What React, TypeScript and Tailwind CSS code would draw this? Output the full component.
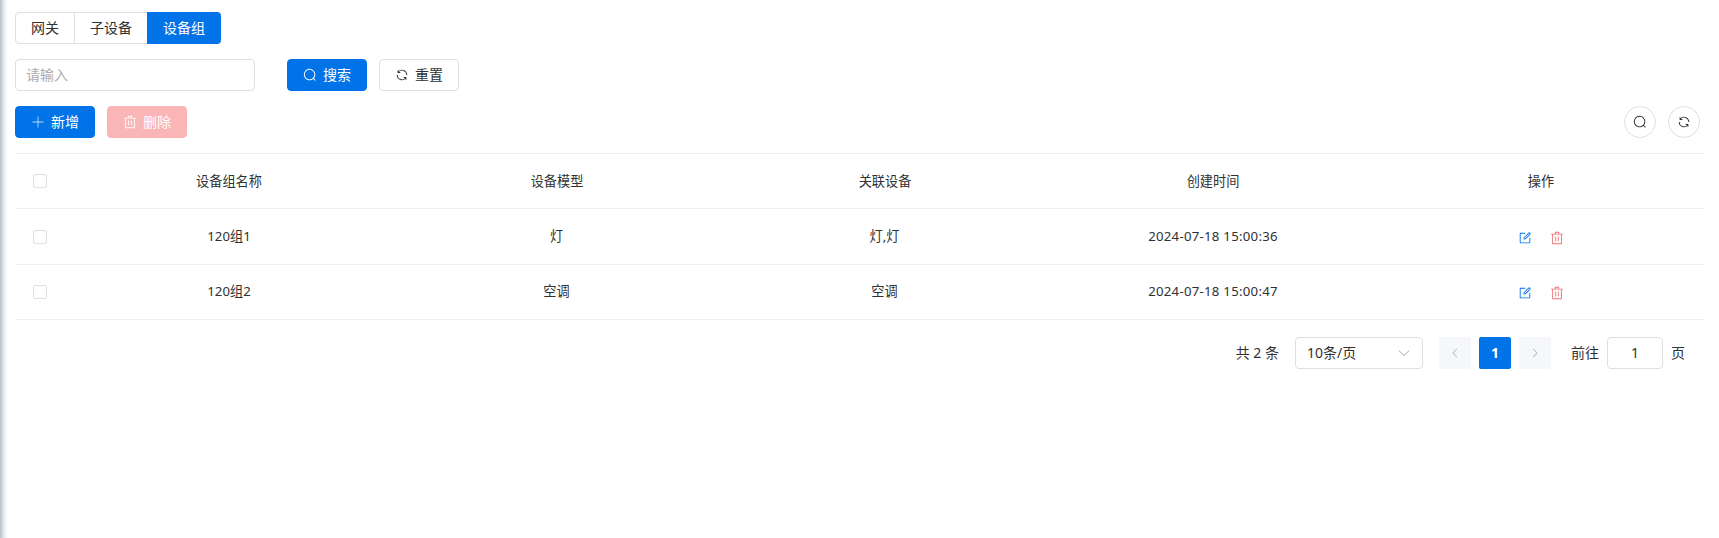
import { useState } from "react";

const SEARCH = ["m795.904 750.72 124.992 124.928a32 32 0 0 1-45.248 45.248L750.656 795.904a416 416 0 1 1 45.248-45.248zM480 832a352 352 0 1 0 0-704 352 352 0 0 0 0 704"];
const REFRESH = ["M771.776 794.88A384 384 0 0 1 128 512h64a320 320 0 0 0 555.712 216.448H654.72a32 32 0 1 1 0-64h149.056a32 32 0 0 1 32 32v148.928a32 32 0 1 1-64 0v-50.56zM276.288 295.616h92.992a32 32 0 0 1 0 64H220.16a32 32 0 0 1-32-32V178.56a32 32 0 0 1 64 0v50.56A384 384 0 0 1 896.128 512h-64a320 320 0 0 0-555.776-216.384z"];
const PLUS = ["M480 480V128a32 32 0 0 1 64 0v352h352a32 32 0 1 1 0 64H544v352a32 32 0 1 1-64 0V544H128a32 32 0 0 1 0-64z"];
const TRASH = ["M160 256H96a32 32 0 0 1 0-64h256V95.936a32 32 0 0 1 32-32h256a32 32 0 0 1 32 32V192h256a32 32 0 1 1 0 64h-64v672a32 32 0 0 1-32 32H192a32 32 0 0 1-32-32zm448-64v-64H416v64zM224 896h576V256H224zm192-128a32 32 0 0 1-32-32V416a32 32 0 0 1 64 0v320a32 32 0 0 1-32 32m192 0a32 32 0 0 1-32-32V416a32 32 0 0 1 64 0v320a32 32 0 0 1-32 32"];
const EDIT = [
  "M832 512a32 32 0 1 1 64 0v352a32 32 0 0 1-32 32H160a32 32 0 0 1-32-32V160a32 32 0 0 1 32-32h352a32 32 0 0 1 0 64H192v640h640z",
  "m469.952 554.24 52.8-7.552L847.104 222.4a32 32 0 1 0-45.248-45.248L477.44 501.44l-7.552 52.8zm422.4-422.4a96 96 0 0 1 0 135.808l-331.84 331.84a32 32 0 0 1-18.112 9.088L436.8 623.68a32 32 0 0 1-36.224-36.224l15.104-105.6a32 32 0 0 1 9.024-18.112l331.904-331.84a96 96 0 0 1 135.744 0z",
];
const ARROW = ["M831.872 340.864 512 652.672 192.128 340.864a30.592 30.592 0 0 0-42.752 0 29.12 29.12 0 0 0 0 41.6L489.664 714.24a32 32 0 0 0 44.672 0l340.288-331.712a29.12 29.12 0 0 0 0-41.728 30.592 30.592 0 0 0-42.752 0z"];

function Icon({ paths, className = "size-3.5" }: { paths: string[]; className?: string }) {
  return (
    <svg viewBox="0 0 1024 1024" fill="currentColor" className={`shrink-0 ${className}`}>
      {paths.map((d) => (
        <path key={d} d={d} />
      ))}
    </svg>
  );
}

function Checkbox() {
  return <span className="block size-3.5 rounded-[2px] border border-[#dcdfe6] bg-white" />;
}

const rows = [
  { name: "120组1", model: "灯", devices: "灯,灯", time: "2024-07-18 15:00:36" },
  { name: "120组2", model: "空调", devices: "空调", time: "2024-07-18 15:00:47" },
];

const button = "flex h-8 w-20 items-center justify-center gap-1.5 rounded-[4px] border";
const pager = "flex size-8 items-center justify-center rounded-[2px]";
const grid = "grid grid-cols-[50px_repeat(5,1fr)] items-center border-b border-[#ebeef5] text-center text-[13.2px]";

export default function App() {
  const [keyword, setKeyword] = useState("");
  const [page, setPage] = useState("1");
  return (
    <div className="flex h-[538px] bg-white font-['Noto_Sans','Noto_Sans_CJK_SC',sans-serif] text-sm leading-5 text-[#303133]">
      <div className="w-2 shrink-0 bg-linear-to-r from-[#b9bfc8] via-[#e9ebee] to-white" />
      <main className="flex min-w-0 flex-1 flex-col pt-3 pr-3.5 pl-[7px]">
        <nav className="flex h-8">
          <button className="w-[60px] rounded-l-[4px] border border-[#dcdfe6]">网关</button>
          <button className="w-[72px] border-y border-[#dcdfe6]">子设备</button>
          <button className="w-[74px] rounded-r-[4px] bg-[#0073e9] text-white">设备组</button>
        </nav>

        <div className="mt-[15px] flex h-8">
          <input
            value={keyword}
            onChange={(e) => setKeyword(e.target.value)}
            placeholder="请输入"
            className="w-60 rounded-[4px] border border-[#dcdfe6] px-2.5 outline-none placeholder:text-[#a8abb2]"
          />
          <button className={`${button} ml-8 border-[#0073e9] bg-[#0073e9] text-white`}>
            <Icon paths={SEARCH} />
            搜索
          </button>
          <button className={`${button} ml-3 border-[#dcdfe6]`}>
            <Icon paths={REFRESH} />
            重置
          </button>
        </div>

        <div className="mt-[15px] flex h-8 pr-[5px]">
          <button className={`${button} border-[#0073e9] bg-[#0073e9] text-white`}>
            <Icon paths={PLUS} className="size-3.5 opacity-75" />
            新增
          </button>
          <button className={`${button} ml-3 border-[#fab6b6] bg-[#fab6b6] text-white`}>
            <Icon paths={TRASH} />
            删除
          </button>
          <button className="ml-auto flex size-8 items-center justify-center rounded-full border border-[#dcdfe6]">
            <Icon paths={SEARCH} />
          </button>
          <button className="ml-3 flex size-8 items-center justify-center rounded-full border border-[#dcdfe6]">
            <Icon paths={REFRESH} />
          </button>
        </div>

        <section className="mt-[15px] border-t border-[#ebeef5]">
          <div className={`${grid} h-[55px]`}>
            <div className="pl-[18px]"><Checkbox /></div>
            <span className="pb-px">设备组名称</span>
            <span className="pb-px">设备模型</span>
            <span className="pb-px">关联设备</span>
            <span className="pb-px">创建时间</span>
            <span className="pb-px">操作</span>
          </div>
          {rows.map((row) => (
            <div key={row.name} className={`${grid} h-14 last:h-[55px]`}>
              <div className="pl-[18px]"><Checkbox /></div>
              <span className="pb-0.5">{row.name}</span>
              <span className="pr-px pb-0.5">{row.model}</span>
              <span className="pr-px pb-0.5">{row.devices}</span>
              <span className="pb-0.5 tracking-[0.27px]">{row.time}</span>
              <div className="flex justify-center gap-[18px] pt-0.5">
                <button className="text-[#0073e9]"><Icon paths={EDIT} /></button>
                <button className="text-[#f56c6c]"><Icon paths={TRASH} /></button>
              </div>
            </div>
          ))}
        </section>

        <footer className="mt-[17px] flex h-8 items-center justify-end pr-5">
          <span>共 2 条</span>
          <button className="ml-4 flex h-8 w-32 items-center justify-between rounded-[4px] border border-[#dcdfe6] pr-[11px] pl-[11px]">
            <span>10条/页</span>
            <Icon paths={ARROW} className="size-3.5 text-[#a8abb2]" />
          </button>
          <div className="ml-4 flex gap-2">
            <button className={`${pager} bg-[#f5f7fa] text-[#a8abb2]`}>
              <Icon paths={ARROW} className="size-3 rotate-90" />
            </button>
            <button className={`${pager} bg-[#0073e9] font-bold text-white`}>1</button>
            <button className={`${pager} bg-[#f5f7fa] text-[#a8abb2]`}>
              <Icon paths={ARROW} className="size-3 -rotate-90" />
            </button>
          </div>
          <span className="ml-5">前往</span>
          <input
            value={page}
            onChange={(e) => setPage(e.target.value)}
            className="mx-2 h-8 w-14 rounded-[4px] border border-[#dcdfe6] pb-px text-center outline-none"
          />
          <span>页</span>
        </footer>
      </main>
    </div>
  );
}
